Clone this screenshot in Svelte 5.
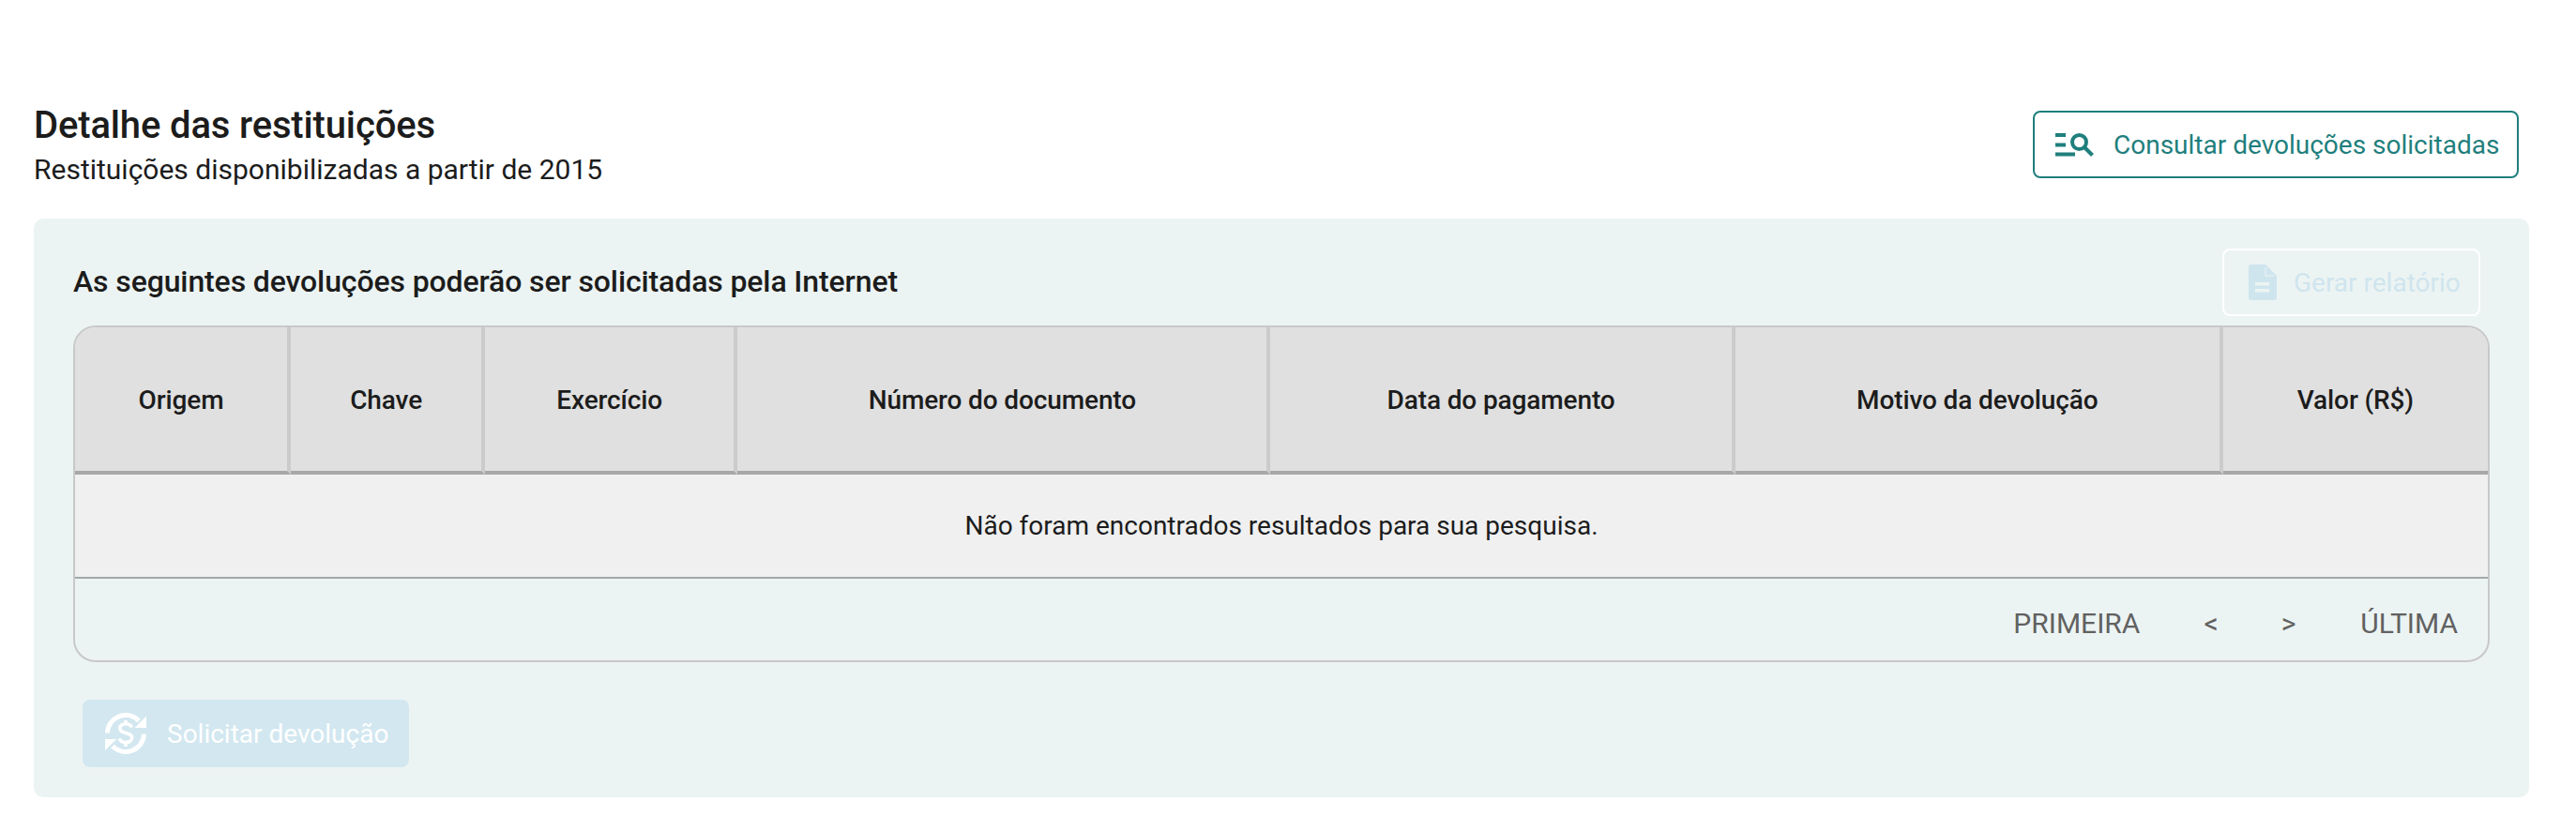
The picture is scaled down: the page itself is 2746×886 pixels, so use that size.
<script>
	const columns = [
		{ label: 'Origem', width: 230 },
		{ label: 'Chave', width: 207 },
		{ label: 'Exercício', width: 269 },
		{ label: 'Número do documento', width: 568 },
		{ label: 'Data do pagamento', width: 495 },
		{ label: 'Motivo da devolução', width: 520 },
		{ label: 'Valor (R$)', width: 282 }
	];
</script>

<main class="page">
	<header class="top">
		<div class="headings">
			<h1>Detalhe das restituições</h1>
			<p>Restituições disponibilizadas a partir de 2015</p>
		</div>
		<button class="btn-consult">
			<svg width="41" height="25" viewBox="0 0 41 25" fill="none">
				<path d="M0 2h11M0 12.5h11M0 22.500h21" stroke="#1f7f7d" stroke-width="4" />
				<circle cx="25.500" cy="9.500" r="7.500" stroke="#1f7f7d" stroke-width="4" />
				<path d="M31 15l8.500 8.500" stroke="#1f7f7d" stroke-width="4" />
			</svg>
			Consultar devoluções solicitadas
		</button>
	</header>

	<section class="card">
		<div class="card-head">
			<h2>As seguintes devoluções poderão ser solicitadas pela Internet</h2>
			<button class="btn-report" disabled>
				<svg width="30" height="38" viewBox="0 0 30 38">
					<path d="M2.500 0H18L30 12v23.500a2.500 2.500 0 0 1-2.500 2.500h-25A2.500 2.500 0 0 1 0 35.500V2.500A2.500 2.500 0 0 1 2.500 0z" fill="#cfe5ee" />
					<path d="M18 3v9h9" fill="none" stroke="#e4f0f3" stroke-width="1.500" />
					<path d="M7 19h15v3.500H7zM7 26h15v3.500H7z" fill="#ecf4f3" />
				</svg>
				<span>Gerar relatório</span>
			</button>
		</div>

		<div class="table-wrap">
			<table>
				<thead>
					<tr>
						{#each columns as col}
							<th style={`width: ${col.width}px`}>{col.label}</th>
						{/each}
					</tr>
				</thead>
				<tbody>
					<tr>
						<td colspan="7">Não foram encontrados resultados para sua pesquisa.</td>
					</tr>
				</tbody>
			</table>
			<nav class="pager">
				<span class="first">PRIMEIRA</span>
				<span class="prev">&lt;</span>
				<span class="next">&gt;</span>
				<span class="last">ÚLTIMA</span>
			</nav>
		</div>

		<button class="btn-request" disabled>
			<svg width="44" height="44" viewBox="0 0 44 44" fill="none">
				<path d="M2.500 21.500A19.500 19.500 0 0 1 36 8.400" stroke="#fff" stroke-width="5" />
				<path d="M41.500 22.500A19.500 19.500 0 0 1 8 35.600" stroke="#fff" stroke-width="5" />
				<path d="M44 3.500V16H31.500z" fill="#fff" />
				<path d="M0 40V28h12.500z" fill="#fff" />
				<path d="M28.500 15.500c-1-2.500-3.500-3.800-6.500-3.800-3.600 0-6.300 1.900-6.300 4.900 0 6.400 13 3.400 13 10 0 3-2.900 5-6.700 5-3.300 0-5.900-1.500-6.900-4.200M22 8v4M22 32v4" stroke="#fff" stroke-width="3.600" />
			</svg>
			Solicitar devolução
		</button>
	</section>
</main>

<style>
	:global(body) {
		background: #fff;
	}

	.page {
		font-family: Roboto, sans-serif;
		color: #1c1c1c;
		padding: 110px 50px 36px 36px;
	}

	.top {
		display: flex;
		justify-content: space-between;
		align-items: flex-start;
		padding-right: 11px;
		height: 123px;
	}

	h1 {
		margin: 0;
		font-size: 40px;
		line-height: 48px;
		font-weight: 500;
		letter-spacing: -0.15px;
	}

	.headings p {
		margin: 0;
		font-size: 30px;
		line-height: 46px;
		font-weight: 400;
	}

	button {
		font-family: inherit;
		display: flex;
		align-items: center;
		box-sizing: border-box;
		border-radius: 8px;
	}

	.btn-consult {
		width: 518px;
		height: 72px;
		margin-top: 8px;
		padding: 0 0 0 22px;
		gap: 21px;
		background: #fff;
		border: 2px solid #1f7f7d;
		color: #1f7f7d;
		font-size: 28px;
	}

	.card {
		background: #ecf4f3;
		border-radius: 10px;
		height: 617px;
		padding: 32px 42px 0;
		box-sizing: border-box;
	}

	.card-head {
		display: flex;
		justify-content: space-between;
		align-items: center;
		height: 72px;
		margin-bottom: 10px;
	}

	h2 {
		margin: 0 0 2px;
		font-size: 32px;
		font-weight: 500;
		letter-spacing: -0.12px;
	}

	.btn-report {
		width: 275px;
		height: 72px;
		margin-right: 10px;
		padding: 0 0 0 26px;
		gap: 18px;
		background: transparent;
		border: 2px solid #fff;
		color: #cfe5ee;
		font-size: 28px;
	}

	.btn-report span {
		padding-top: 1px;
	}

	.table-wrap {
		border: 2px solid #c8c8c8;
		border-radius: 24px;
		overflow: hidden;
		height: 359px;
		box-sizing: border-box;
	}

	table {
		width: 100%;
		border-collapse: separate;
		border-spacing: 0;
		table-layout: fixed;
	}

	th {
		box-sizing: border-box;
		height: 157px;
		background: #e0e0e0;
		border-right: 4px solid #cbcbcb;
		border-bottom: 4px solid #a8a8a8;
		font-size: 28px;
		font-weight: 500;
		letter-spacing: -0.12px;
		padding: 2px 0 0;
	}

	th:last-child {
		border-right: 0;
	}

	td {
		box-sizing: border-box;
		height: 111px;
		background: #f0f0f0;
		border-bottom: 2px solid #a2a8a8;
		text-align: center;
		font-size: 28px;
		padding: 0;
	}

	.pager {
		display: flex;
		justify-content: flex-end;
		align-items: center;
		box-sizing: border-box;
		height: 87px;
		padding: 8px 32px 0 0;
		font-size: 30px;
		color: #616161;
	}

	.prev {
		margin-left: 68px;
	}

	.next {
		margin-left: 67px;
	}

	.last {
		margin-left: 69px;
	}

	.btn-request {
		width: 348px;
		height: 72px;
		margin: 40px 0 0 10px;
		padding: 0 0 0 24px;
		gap: 22px;
		border: 0;
		background: #d2e7f0;
		color: #fff;
		font-size: 28px;
	}
</style>
